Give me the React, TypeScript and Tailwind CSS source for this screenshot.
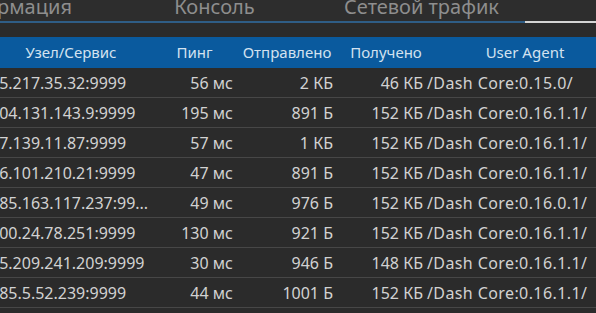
import React from "react";

const ROWS = [
  ["95.217.35.32:9999", "56 мс", "2 КБ", "46 КБ", "/Dash Core:0.15.0/"],
  ["104.131.143.9:9999", "195 мс", "891 Б", "152 КБ", "/Dash Core:0.16.1.1/"],
  ["47.139.11.87:9999", "57 мс", "1 КБ", "152 КБ", "/Dash Core:0.16.1.1/"],
  ["46.101.210.21:9999", "47 мс", "891 Б", "152 КБ", "/Dash Core:0.16.1.1/"],
  ["185.163.117.237:99...", "49 мс", "976 Б", "152 КБ", "/Dash Core:0.16.0.1/"],
  ["100.24.78.251:9999", "130 мс", "921 Б", "152 КБ", "/Dash Core:0.16.1.1/"],
  ["95.209.241.209:9999", "30 мс", "946 Б", "148 КБ", "/Dash Core:0.16.1.1/"],
  ["185.5.52.239:9999", "44 мс", "1001 Б", "152 КБ", "/Dash Core:0.16.1.1/"],
];

const TABS = ["Информация", "Консоль", "Сетевой трафик", "Пиры"];

export default function App() {
  return (
    <div
      className="w-[596px] h-[313px] overflow-hidden bg-[#2b2b2b]"
      style={{ fontFamily: '"Noto Sans", "Open Sans", sans-serif' }}
    >
      {/* Tabs */}
      <div className="flex h-[23px] ml-[-96px] bg-[#2d2d2d]">
        {TABS.map((t, i) => (
          <div
            key={t}
            className={`w-[207px] shrink-0 h-full flex items-end justify-center border-b-2 text-[20px] leading-[20px] text-[#8e8e8e] ${
              i === 3 ? "border-[#d4d4d4]" : "border-[#2f5d86]"
            }`}
          >
            <span className="pb-[4px] whitespace-nowrap">{t}</span>
          </div>
        ))}
      </div>

      <div className="h-[14px]" />

      {/* Table */}
      <div className="ml-[-20px]">
        <div className="flex h-[31px] items-center bg-[#0a5a9e] text-[15px] text-[#d3e2f0]">
          <div className="w-[182px] shrink-0 text-center">Узел/Сервис</div>
          <div className="w-[75px] shrink-0 text-center pr-[10px]">Пинг</div>
          <div className="w-[100px] shrink-0 text-center">Отправлено</div>
          <div className="w-[88px] shrink-0 text-center pl-[10px]">Получено</div>
          <div className="w-[200px] shrink-0 text-center">User Agent</div>
        </div>
        {ROWS.map((r, i) => (
          <div
            key={i}
            className="flex h-[30px] items-center border-b border-[#474747] text-[16px] text-[#d2d2d2] whitespace-nowrap"
          >
            <div className="w-[182px] shrink-0 pl-[10px] overflow-hidden">{r[0]}</div>
            <div className="w-[75px] shrink-0 text-right pr-[4px]">{r[1]}</div>
            <div className="w-[100px] shrink-0 text-right pr-[4px]">{r[2]}</div>
            <div className="w-[88px] shrink-0 text-right pr-[2px]">{r[3]}</div>
            <div className="w-[200px] shrink-0 pl-[2px] tracking-[0.4px]">{r[4]}</div>
          </div>
        ))}
      </div>
    </div>
  );
}
